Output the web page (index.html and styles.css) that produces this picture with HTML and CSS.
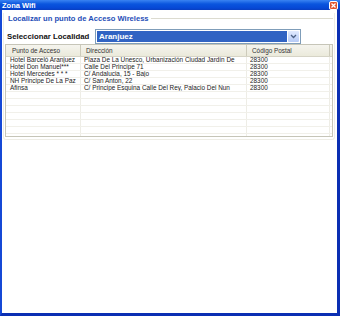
FILE: index.html
```html
<!DOCTYPE html>
<html lang="es">
<head>
  <meta charset="UTF-8">
  <title>Zona Wifi</title>
  <link rel="stylesheet" href="styles.css">
</head>
<body>
  <div class="window">
    <div class="titlebar">
      <span class="title">Zona Wifi</span>
      <span class="close">
        <svg width="9" height="9" viewBox="0 0 9 9"><path d="M2.5 2.5 L6.5 6.5 M6.5 2.5 L2.5 6.5" stroke="#fff" stroke-width="1.3"/></svg>
      </span>
    </div>

    <div class="client">
      <div class="group">
        <div class="group-title">Localizar un punto de Acceso Wireless</div>

        <div class="select-row">
          <span class="label">Seleccionar Localidad</span>
          <div class="combo">
            <span class="combo-value">Aranjuez</span>
            <span class="combo-btn">
              <svg width="7" height="5" viewBox="0 0 7 5"><path d="M1 1 L3.5 3.5 L6 1" fill="none" stroke="#4d6185" stroke-width="1.3"/></svg>
            </span>
          </div>
        </div>

        <div class="grid">
          <div class="row head">
            <div class="c1">Punto de Acceso</div>
            <div class="c2">Dirección</div>
            <div class="c3">Código Postal</div>
            <div class="c4"></div>
          </div>
          <div class="row">
            <div class="c1">Hotel Barceló Aranjuez</div>
            <div class="c2">Plaza De La Unesco, Urbanización Ciudad Jardín De</div>
            <div class="c3">28300</div>
            <div class="c4"></div>
          </div>
          <div class="row">
            <div class="c1">Hotel Don Manuel***</div>
            <div class="c2">Calle Del Principe 71</div>
            <div class="c3">28300</div>
            <div class="c4"></div>
          </div>
          <div class="row">
            <div class="c1">Hotel Mercedes * * *</div>
            <div class="c2">C/ Andalucia, 15 - Bajo</div>
            <div class="c3">28300</div>
            <div class="c4"></div>
          </div>
          <div class="row">
            <div class="c1">NH Principe De La Paz</div>
            <div class="c2">C/ San Anton, 22</div>
            <div class="c3">28300</div>
            <div class="c4"></div>
          </div>
          <div class="row">
            <div class="c1">Afinsa</div>
            <div class="c2">C/ Principe Esquina Calle Del Rey, Palacio Del Nun</div>
            <div class="c3">28300</div>
            <div class="c4"></div>
          </div>
          <div class="row"><div class="c1"></div><div class="c2"></div><div class="c3"></div><div class="c4"></div></div>
          <div class="row"><div class="c1"></div><div class="c2"></div><div class="c3"></div><div class="c4"></div></div>
          <div class="row"><div class="c1"></div><div class="c2"></div><div class="c3"></div><div class="c4"></div></div>
          <div class="row"><div class="c1"></div><div class="c2"></div><div class="c3"></div><div class="c4"></div></div>
          <div class="row"><div class="c1"></div><div class="c2"></div><div class="c3"></div><div class="c4"></div></div>
          <div class="row"><div class="c1"></div><div class="c2"></div><div class="c3"></div><div class="c4"></div></div>
          <div class="row"><div class="c1"></div><div class="c2"></div><div class="c3"></div><div class="c4"></div></div>
        </div>
      </div>
    </div>
  </div>
</body>
</html>
```

FILE: styles.css
```css
body {
  margin: 0;
  font-family: "Liberation Sans", Arial, sans-serif;
}
.window {
  width: 340px;
  height: 316px;
  box-sizing: border-box;
  display: flex;
  flex-direction: column;
  background: #fff;
  border-left: 2px solid #1548d6;
  border-right: 3px solid #0b2fb3;
  border-bottom: 3px solid #0b2fb3;
}
.titlebar {
  height: 10px;
  margin: 0 -3px 0 -2px;
  padding: 0 2px 0 2px;
  display: flex;
  align-items: center;
  justify-content: space-between;
  background: linear-gradient(#3a83f2, #0a55de 40%, #0648d6 80%, #0a3fc0);
}
.title {
  color: #fff;
  font-size: 7.5px;
  font-weight: bold;
}
.close {
  width: 9px;
  height: 9px;
  box-sizing: border-box;
  border: 1px solid #fff;
  border-radius: 2px;
  background: #e0552f;
  display: flex;
  align-items: center;
  justify-content: center;
}
.close svg {
  margin: -1px;
}
.client {
  flex: 1;
  padding: 3px 2px 0 1px;
}
.group {
  height: 126px;
  border: 1px solid #eeede6;
  border-top: none;
  border-radius: 0 0 3px 3px;
  padding: 0 1px 0 1px;
}
.group-title {
  height: 10px;
  display: flex;
  align-items: center;
  gap: 2px;
  padding-left: 3px;
  color: #1f4fb7;
  font-size: 7.6px;
  font-weight: bold;
}
.group-title::after {
  content: "";
  flex: 1;
  border-top: 1px solid #dcdbd0;
}
.select-row {
  height: 16px;
  margin-top: 5px;
  display: flex;
  align-items: center;
}
.label {
  width: 88px;
  padding-left: 2px;
  font-size: 7.8px;
  font-weight: bold;
  color: #111;
}
.combo {
  width: 206px;
  height: 15px;
  box-sizing: border-box;
  border: 1px solid #7f9db9;
  display: flex;
  align-items: stretch;
  background: #fff;
}
.combo-value {
  flex: 1;
  margin: 1px;
  padding-left: 2px;
  background: #3163c3;
  color: #fff;
  font-size: 8px;
  font-weight: bold;
  display: flex;
  align-items: center;
}
.combo-btn {
  width: 11px;
  margin: 1px 1px 1px 0;
  background: linear-gradient(#e1eafe, #b7cbf6);
  border-radius: 1px;
  display: flex;
  align-items: center;
  justify-content: center;
}
.grid {
  height: 93px;
  box-sizing: border-box;
  border: 1px solid #c6c5b8;
  background: #fff;
  font-size: 6.4px;
  color: #222;
  overflow: hidden;
}
.row {
  display: flex;
  height: 6px;
  line-height: 6px;
  border-bottom: 1px solid #f1f0ea;
}
.row.head {
  height: 11px;
  line-height: 11px;
  background: linear-gradient(#f5f4ee, #ebeadb);
  border-bottom: 1px solid #d6d4c6;
  color: #333;
}
.c1, .c2, .c3, .c4 {
  white-space: nowrap;
  overflow: hidden;
  box-sizing: border-box;
  border-right: 1px solid #eeede6;
}
.c1 {
  width: 75px;
  padding-left: 4px;
}
.c2 {
  width: 166px;
  padding-left: 3px;
}
.c3 {
  width: 83px;
  padding-left: 3px;
}
.c4 {
  flex: 1;
  border-right: none;
}
.head .c1, .head .c2, .head .c3 {
  border-right: 1px solid #cdcbbb;
}
.head .c1 {
  padding-left: 6px;
}
.head .c2 {
  padding-left: 5px;
}
.head .c3 {
  padding-left: 5px;
}
```
